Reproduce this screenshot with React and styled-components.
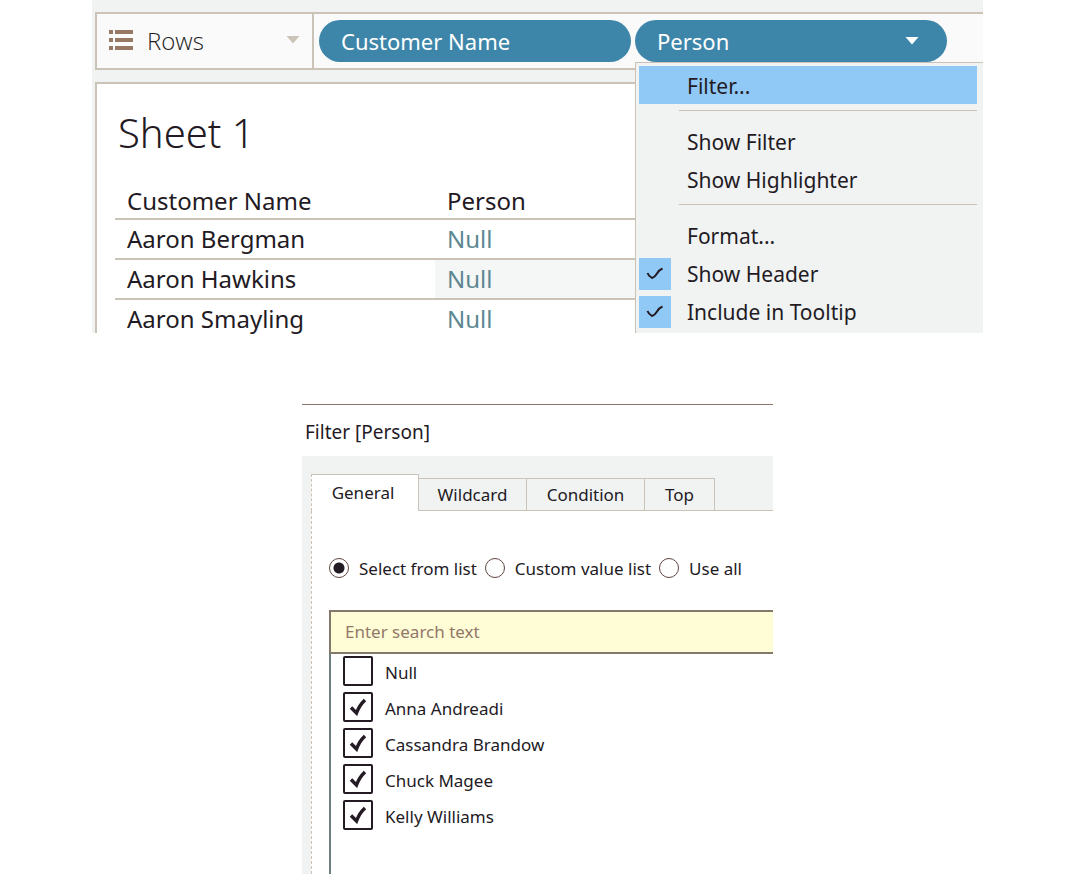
import React, { useState } from "react";
import styled, { createGlobalStyle, css } from "styled-components";

const ink = "#231a24";
const line = "#cbc3b8";
const panel = "#f0f3f2";
const blue = "#3e86a9";
const lightBlue = "#90c9f6";
const edge = "#84786c";

const GlobalStyle = createGlobalStyle`
  *, *::before, *::after { box-sizing: border-box; }
  body { margin: 0; background: #fff; color: ${ink}; font-family: "Noto Sans", "Open Sans", sans-serif; }
  button, input { font: inherit; color: inherit; margin: 0; }
  button { border: 0; background: none; padding: 0; cursor: pointer; text-align: left; }
  h1, h2 { margin: 0; font-weight: 400; }
`;

const Page = styled.main`
  display: flex;
  flex-direction: column;
  align-items: center;
  gap: 71px;
  min-height: 100vh;
`;

/* Worksheet */
const Workbook = styled.section`
  width: 100%;
  max-width: 891px;
  padding: 12px 0 0 3px;
  background: ${panel};
`;

const Shelf = styled.div`
  display: flex;
  height: 58px;
  border: 2px solid ${line};
  border-right: 0;
  background: #fafafa;
`;

const ShelfLabel = styled.button`
  display: flex;
  align-items: center;
  gap: 13px;
  flex: 0 0 217px;
  padding: 0 12px 2px;
  border-right: 2px solid ${line};
  font-family: "Open Sans", sans-serif;
  font-weight: 300;
  font-size: 24px;
  svg:last-child { margin-left: auto; }
`;

const Pills = styled.div`
  display: flex;
  align-items: center;
  flex: 1;
  min-width: 0;
  gap: 4px;
  padding-left: 5px;
`;

const PillSlot = styled.div`
  position: relative;
  flex: 0 1 312px;
`;

const Pill = styled.button`
  display: flex;
  align-items: center;
  justify-content: space-between;
  width: 100%;
  height: 42px;
  padding: 0 28px 0 22px;
  border-radius: 21px;
  background: ${blue};
  color: #fff;
  font-size: 22px;
  line-height: 30px;
  white-space: nowrap;
`;

const Menu = styled.div`
  position: absolute;
  top: 42px;
  left: 0;
  z-index: 1;
  width: 348px;
  padding: 3px 6px 3px 3px;
  border: 1px solid ${line};
  border-width: 1px 0 0 1px;
  background: ${panel};
`;

const MenuItem = styled.button`
  display: grid;
  grid-template-columns: 32px 1fr;
  column-gap: 16px;
  align-items: center;
  width: 100%;
  height: 38px;
  padding-top: 2px;
  font-size: 21px;
  background: ${(p) => (p.$active ? lightBlue : "transparent")};
`;

const MenuMark = styled.span`
  display: grid;
  place-items: center;
  height: 32px;
  background: ${(p) => (p.$on ? lightBlue : "transparent")};
`;

const Separator = styled.hr`
  height: 1px;
  margin: 6px 0 11px 40px;
  border: 0;
  background: ${line};
`;

const Sheet = styled.div`
  margin-top: 12px;
  padding: 28px 0 0 18px;
  border: 2px solid ${line};
  border-width: 2px 0 0 2px;
  background: #fff;
`;

const SheetTitle = styled.h1`
  padding-left: 3px;
  font-family: "Noto Sans", "Open Sans", sans-serif;
  font-weight: 300;
  font-size: 40px;
  line-height: 42px;
`;

const Table = styled.table`
  width: 100%;
  margin-top: 28px;
  border-collapse: separate;
  border-spacing: 0;
  table-layout: fixed;
  font-size: 24px;
  line-height: 28px;
  col:first-child { width: 320px; }
  th, td { padding: 5px 12px; border-bottom: 2px solid ${line}; font-weight: 400; text-align: left; }
  thead th { padding-bottom: 3px; }
  tbody tr:last-child > * { padding-bottom: 0; border-bottom: 0; }
`;

const ValueCell = styled.td`
  color: #5d8791;
  background: ${(p) => (p.$shaded ? "#f5f7f6" : "transparent")};
`;

/* Filter dialog */
const Dialog = styled.section`
  display: flex;
  flex-direction: column;
  flex: 1;
  width: 100%;
  max-width: 471px;
  border-top: 1px solid #8c7568;
  font-size: 17px;
`;

const DialogTitle = styled.h2`
  padding: 14px 3px 10px;
  font-size: 19px;
  line-height: 27px;
`;

const DialogBody = styled.div`
  display: flex;
  flex-direction: column;
  flex: 1;
  padding: 18px 0 0 9px;
  background: ${panel};
`;

const Tabs = styled.div`
  display: flex;
  align-items: flex-end;
  &::after { content: ""; flex: 1; height: 33px; border-bottom: 1px solid ${line}; }
`;

const Tab = styled.button`
  width: ${(p) => p.$width}px;
  height: 33px;
  border: 1px solid ${line};
  border-left: 0;
  line-height: 30px;
  text-align: center;
  white-space: nowrap;
  ${(p) =>
    p.$active &&
    css`
      height: 37px;
      padding-right: 4px;
      border-left: 1px dashed ${line};
      border-bottom: 0;
      background: #fff;
    `}
`;

const TabPanel = styled.div`
  display: flex;
  flex-direction: column;
  flex: 1;
  padding: 42px 0 0 17px;
  border-left: 1px dashed ${line};
  background: #fff;
`;

const RadioRow = styled.div`
  display: flex;
  flex-wrap: wrap;
  gap: 8px;
`;

const RadioLabel = styled.label`
  display: flex;
  align-items: center;
  gap: 10px;
  line-height: 28px;
`;

const LabelText = styled.span`
  padding-top: 2px;
`;

const Radio = styled.input`
  appearance: none;
  width: 20px;
  height: 20px;
  border: 1px solid #5f4540;
  border-radius: 50%;
  background: #fff;
  &:checked { background: radial-gradient(circle, ${ink} 5px, #fff 6px); }
`;

const Search = styled.input`
  width: 100%;
  height: 44px;
  margin-top: 27px;
  padding: 0 14px 2px;
  border: 2px solid ${edge};
  border-right: 0;
  border-radius: 0;
  background: #fffdd6;
  outline: 0;
  &::placeholder { color: #93786a; opacity: 1; }
`;

const Options = styled.div`
  flex: 1;
  padding: 2px 0 8px 12px;
  border-left: 2px solid #6f7f80;
`;

const Option = styled.label`
  display: flex;
  align-items: center;
  gap: 12px;
  height: 30px;
  margin-bottom: 6px;
`;

const BoxStack = styled.span`
  display: grid;
  place-items: center;
  > * { grid-area: 1 / 1; }
  svg { pointer-events: none; }
`;

const Box = styled.input`
  appearance: none;
  width: 30px;
  height: 30px;
  border: 2px solid ${ink};
  border-radius: 2px;
  background: #fff;
`;

const RowsIcon = () => (
  <svg width="25" height="20" viewBox="0 0 25 20" fill="#967864" aria-hidden="true">
    {[0, 8, 16].map((y) => (
      <path key={y} d={`M0 ${y}h4v4h-4zM6 ${y}h18v4h-18z`} />
    ))}
  </svg>
);

const Caret = ({ color }) => (
  <svg width="14" height="8" viewBox="0 0 14 8" fill={color} aria-hidden="true">
    <path d="M0.500 0h13L7 7.500z" />
  </svg>
);

const MenuCheck = () => (
  <svg width="18" height="14" viewBox="0 0 18 14" fill="none" stroke={ink} strokeWidth="2" aria-hidden="true">
    <path d="M1.500 6Q2.500 9 6 11Q9 10 11 6.500T16.500 1.500" />
  </svg>
);

const BoxCheck = () => (
  <svg width="18" height="18" viewBox="0 0 18 18" fill="none" stroke={ink} strokeWidth="3.500" aria-hidden="true">
    <path d="M2 9.500L7.500 15Q10.500 7 16 2" />
  </svg>
);

const menuItems = [
  { label: "Filter...", active: true },
  null,
  { label: "Show Filter" },
  { label: "Show Highlighter" },
  null,
  { label: "Format..." },
  { label: "Show Header", checked: true },
  { label: "Include in Tooltip", checked: true },
];

const customers = ["Aaron Bergman", "Aaron Hawkins", "Aaron Smayling"];
const tabs = [
  { label: "General", width: 108 },
  { label: "Wildcard", width: 108 },
  { label: "Condition", width: 118 },
  { label: "Top", width: 70 },
];
const modes = ["Select from list", "Custom value list", "Use all"];
const people = ["Null", "Anna Andreadi", "Cassandra Brandow", "Chuck Magee", "Kelly Williams"];

export default function App() {
  const [mode, setMode] = useState(modes[0]);
  const [tab, setTab] = useState("General");
  const [selected, setSelected] = useState(people.slice(1));
  const toggle = (name) =>
    setSelected((s) => (s.includes(name) ? s.filter((n) => n !== name) : [...s, name]));

  return (
    <>
      <GlobalStyle />
      <Page>
        <Workbook aria-label="Worksheet">
          <Shelf>
            <ShelfLabel type="button">
              <RowsIcon />
              Rows
              <Caret color={line} />
            </ShelfLabel>
            <Pills>
              <PillSlot>
                <Pill type="button">Customer Name</Pill>
              </PillSlot>
              <PillSlot>
                <Pill type="button" aria-haspopup="menu" aria-expanded="true">
                  Person
                  <Caret color="#fff" />
                </Pill>
                <Menu role="menu" aria-label="Person">
                  {menuItems.map((item, i) =>
                    item ? (
                      <MenuItem
                        key={item.label}
                        type="button"
                        role={item.checked ? "menuitemcheckbox" : "menuitem"}
                        aria-checked={item.checked}
                        $active={item.active}
                      >
                        <MenuMark $on={item.checked}>{item.checked && <MenuCheck />}</MenuMark>
                        {item.label}
                      </MenuItem>
                    ) : (
                      <Separator key={i} />
                    )
                  )}
                </Menu>
              </PillSlot>
            </Pills>
          </Shelf>
          <Sheet>
            <SheetTitle>Sheet 1</SheetTitle>
            <Table>
              <colgroup>
                <col />
                <col />
              </colgroup>
              <thead>
                <tr>
                  <th scope="col">Customer Name</th>
                  <th scope="col">Person</th>
                </tr>
              </thead>
              <tbody>
                {customers.map((name, i) => (
                  <tr key={name}>
                    <th scope="row">{name}</th>
                    <ValueCell $shaded={i === 1}>Null</ValueCell>
                  </tr>
                ))}
              </tbody>
            </Table>
          </Sheet>
        </Workbook>

        <Dialog aria-labelledby="filter-title">
          <DialogTitle id="filter-title">Filter [Person]</DialogTitle>
          <DialogBody>
            <Tabs role="tablist">
              {tabs.map((t) => (
                <Tab
                  key={t.label}
                  type="button"
                  role="tab"
                  aria-selected={tab === t.label}
                  $active={tab === t.label}
                  $width={t.width}
                  onClick={() => setTab(t.label)}
                >
                  {t.label}
                </Tab>
              ))}
            </Tabs>
            <TabPanel role="tabpanel">
              <RadioRow>
                {modes.map((m) => (
                  <RadioLabel key={m}>
                    <Radio type="radio" name="mode" checked={mode === m} onChange={() => setMode(m)} />
                    <LabelText>{m}</LabelText>
                  </RadioLabel>
                ))}
              </RadioRow>
              <Search type="text" aria-label="Search" placeholder="Enter search text" />
              <Options>
                {people.map((name) => (
                  <Option key={name}>
                    <BoxStack>
                      <Box type="checkbox" checked={selected.includes(name)} onChange={() => toggle(name)} />
                      {selected.includes(name) && <BoxCheck />}
                    </BoxStack>
                    <LabelText>{name}</LabelText>
                  </Option>
                ))}
              </Options>
            </TabPanel>
          </DialogBody>
        </Dialog>
      </Page>
    </>
  );
}
